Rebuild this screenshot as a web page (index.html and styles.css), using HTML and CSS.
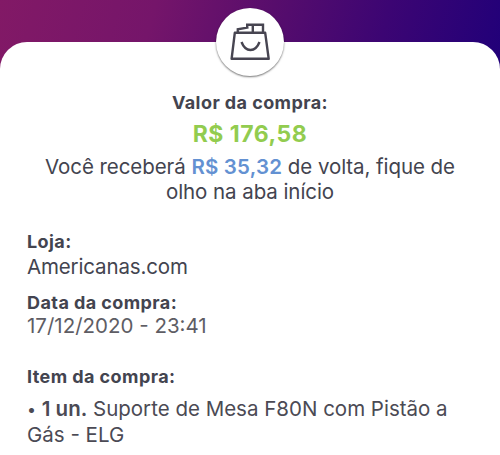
FILE: index.html
```html
<!DOCTYPE html>
<html lang="pt-BR">
<head>
    <meta charset="UTF-8">
    <title>Detalhes da compra</title>
    <link rel="stylesheet" href="styles.css">
</head>
<body>
    <div class="card">
        <div class="badge">
            <svg width="40" height="38" viewBox="0 0 40 38" fill="none" stroke="#474551" stroke-width="2.4">
                <path d="M4.8 9.8H35.2L38.7 35.8H1.6Z" stroke-linejoin="round"/>
                <path d="M7.8 9.5V6.3L18.5 4.4M17.2 5V1.7H33V9.5M22.8 1.7V9.5"/>
                <path d="M11.5 19C15.5 29.6 25.5 29.6 29.5 19"/>
            </svg>
        </div>
        <div class="summary">
            <h3 class="title">Valor da compra:</h3>
            <p class="amount">R$ 176,58</p>
            <p class="cashback">Você receberá <b>R$ 35,32</b> de volta, fique de<br>olho na aba início</p>
        </div>
        <div class="details">
            <div class="store">
                <h3>Loja:</h3>
                <p>Americanas.com</p>
            </div>
            <div class="date">
                <h3>Data da compra:</h3>
                <p>17/12/2020 - 23:41</p>
            </div>
            <div class="items">
                <h3>Item da compra:</h3>
                <p><span class="dot">•</span> <b>1 un.</b> Suporte de Mesa F80N com Pistão a<br>Gás - ELG</p>
            </div>
        </div>
    </div>
</body>
</html>
```

FILE: styles.css
```css
* {
    box-sizing: border-box;
}
body {
    margin: 0;
    height: 455px;
    padding-top: 42px;
    overflow: hidden;
    background: linear-gradient(105deg, #821966 0%, #75156a 30%, #570d6c 53%, #3c0573 75%, #200079 100%) no-repeat;
    background-size: 100% 80px;
    font-family: Inter, "Liberation Sans", sans-serif;
    color: #43444f;
}
h3, p {
    margin: 0;
}
h3 {
    font-size: 18px;
    line-height: 20px;
    font-weight: 700;
    letter-spacing: 0.42px;
}
p {
    font-size: 20.5px;
    line-height: 25.5px;
    letter-spacing: -0.07px;
    white-space: nowrap;
}
b {
    font-weight: 600;
}
.card {
    position: relative;
    height: 413px;
    padding-top: 51px;
    background: #fff;
    border-radius: 27px 27px 0 0;
}
.badge {
    position: absolute;
    top: -34px;
    left: 216px;
    width: 68px;
    height: 68px;
    padding: 15px 0 0 14px;
    background: #fff;
    border-radius: 50%;
    box-shadow: 0 1px 2px rgba(0, 0, 0, 0.55);
}
.badge svg {
    display: block;
}
.summary {
    text-align: center;
}
.amount {
    margin-top: 6px;
    font-size: 23px;
    line-height: 30px;
    font-weight: 700;
    letter-spacing: 0.5px;
    color: #92cc4f;
}
.cashback {
    margin-top: 5px;
    line-height: 25px;
}
.cashback b {
    letter-spacing: 0.2px;
    color: #6391d2;
}
.details {
    padding: 28px 27px 0;
}
.store p {
    margin-top: 2px;
    letter-spacing: -0.15px;
}
.date {
    margin-top: 13px;
}
.date p {
    letter-spacing: 0;
    color: #5e5d64;
}
.items {
    margin-top: 29px;
}
.items p {
    margin-top: 9px;
    letter-spacing: 0;
    color: #4b4a54;
}
.dot {
    font-size: 16px;
    line-height: 1;
    vertical-align: 1px;
}
```
